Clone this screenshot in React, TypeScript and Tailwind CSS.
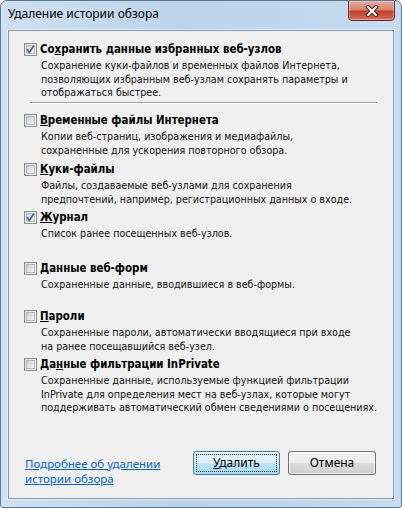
import React from "react";

const tahoma: React.CSSProperties = {
  fontFamily: "'DejaVu Sans Condensed', 'DejaVu Sans', 'Liberation Sans', sans-serif",
  fontStretch: "condensed",
};
const segoe: React.CSSProperties = {
  fontFamily: "'Noto Sans', 'Open Sans', 'Liberation Sans', sans-serif",
};

function CheckBox({ checked }: { checked?: boolean }) {
  return (
    <svg width="13" height="13" viewBox="0 0 13 13" className="shrink-0 mt-[2px]">
      <defs>
        <linearGradient id="cbo" x1="0" y1="0" x2="1" y2="1">
          <stop offset="0" stopColor="#dcdcdc" />
          <stop offset="1" stopColor="#ffffff" />
        </linearGradient>
        <linearGradient id="cbi" x1="0" y1="0" x2="1" y2="1">
          <stop offset="0" stopColor="#cbcfd5" />
          <stop offset="1" stopColor="#f6f6f6" />
        </linearGradient>
      </defs>
      <rect x="0.5" y="0.5" width="12" height="12" fill="url(#cbo)" stroke="#8e8f8f" />
      <rect x="2.5" y="2.5" width="8" height="8" fill="url(#cbi)" stroke="#b4b8be" />
      {checked && (
        <path d="M3.2 6.2 L5.4 9.4 L9.8 2.8" fill="none" stroke="#4a5d8f" strokeWidth="1.7" strokeLinejoin="round" />
      )}
    </svg>
  );
}

function Item({
  checked,
  title,
  lines,
  h,
}: {
  checked?: boolean;
  title: React.ReactNode;
  lines: string[];
  h?: string;
}) {
  return (
    <div className={`flex pl-[15px] ${h ?? ""}`}>
      <CheckBox checked={checked} />
      <div className="ml-[3px]">
        <div className="text-[11.4px] leading-[16px] font-bold text-black whitespace-nowrap" style={tahoma}>
          {title}
        </div>
        <div className="mt-[2px] ml-[1px] text-[10.65px] leading-[13.5px] text-[#111] whitespace-nowrap" style={tahoma}>
          {lines.map((l, i) => (
            <div key={i}>{l}</div>
          ))}
        </div>
      </div>
    </div>
  );
}

export default function App() {
  return (
    <div className="w-[402px] h-[508px] bg-white">
      <div className="relative w-[402px] h-[508px] rounded-t-[7px] rounded-b-[3px] border border-[#5f7690] bg-[linear-gradient(to_right,#cfe0f2,#bcd3eb_45%,#c6dbef)] flex flex-col overflow-hidden">
        {/* title bar */}
        <div className="h-[29px] shrink-0 flex items-start pl-[7px] pt-[5px]">
          <span className="text-[12px] leading-[16px] text-black" style={segoe}>
            Удаление истории обзора
          </span>
        </div>
        {/* close button */}
        <div className="absolute top-[-1px] right-[6px] w-[47px] h-[21px] rounded-b-[4px] border border-[#6d2a22] bg-[linear-gradient(to_bottom,#e9a99c,#d8836f_45%,#c0402a_55%,#d2705c)] flex items-center justify-center shadow-[inset_0_0_0_1px_rgba(255,255,255,0.35)]">
          <svg width="14" height="12" viewBox="0 0 14 12">
            <path d="M3 2 L11 10 M11 2 L3 10" stroke="#4a1a14" strokeWidth="4" strokeLinecap="square" />
            <path d="M3 2 L11 10 M11 2 L3 10" stroke="#ffffff" strokeWidth="2.2" strokeLinecap="square" />
          </svg>
        </div>
        {/* panel */}
        <div className="mx-[7px] mb-[8px] flex-1 border border-[#8599af] shadow-[0_0_0_1px_rgba(255,255,255,0.5)] bg-[#f0f0f0] flex flex-col">
          <div className="pt-[10px]">
            <Item
              checked
              h="h-[61px]"
              title={
                <>
                  Со<u>х</u>ранить данные избранных веб-узлов
                </>
              }
              lines={[
                "Сохранение куки-файлов и временных файлов Интернета,",
                "позволяющих избранным веб-узлам сохранять параметры и",
                "отображаться быстрее.",
              ]}
            />
            <div className="ml-[21px] w-[347px] h-[2px] border-t border-[#a0a0a0] border-b border-b-white" />
            <div className="h-[8px]" />
            <Item
              h="h-[49px]"
              title={
                <>
                  <u>В</u>ременные файлы Интернета
                </>
              }
              lines={["Копии веб-страниц, изображения и медиафайлы,", "сохраненные для ускорения повторного обзора."]}
            />
            <Item
              h="h-[48px]"
              title={
                <>
                  <u>К</u>уки-файлы
                </>
              }
              lines={[
                "Файлы, создаваемые веб-узлами для сохранения",
                "предпочтений, например, регистрационных данных о входе.",
              ]}
            />
            <Item
              checked
              h="h-[51px]"
              title={
                <>
                  <u>Ж</u>урнал
                </>
              }
              lines={["Список ранее посещенных веб-узлов."]}
            />
            <Item
              h="h-[48px]"
              title={
                <>
                  <u>Д</u>анные веб-форм
                </>
              }
              lines={["Сохраненные данные, вводившиеся в веб-формы."]}
            />
            <Item
              h="h-[48px]"
              title={
                <>
                  <u>П</u>ароли
                </>
              }
              lines={[
                "Сохраненные пароли, автоматически вводящиеся при входе",
                "на ранее посещавшийся веб-узел.",
              ]}
            />
            <Item
              title={
                <>
                  Да<u>н</u>ные фильтрации InPrivate
                </>
              }
              lines={[
                "Сохраненные данные, используемые функцией фильтрации",
                "InPrivate для определения мест на веб-узлах, которые могут",
                "поддерживать автоматический обмен сведениями о посещениях.",
              ]}
            />
          </div>
          <div className="mt-auto flex items-start pl-[16px] pr-[17px] pb-[12px]">
            <div className="mt-[5px] text-[11.5px] text-[#0a64c8] underline whitespace-nowrap" style={segoe}>
              <div className="h-[15px] leading-[15px]">Подробнее об удалении</div>
              <div className="h-[15px] leading-[15px]">истории обзора</div>
            </div>
            <div className="ml-auto flex gap-[8px]">
              <div className="w-[87px] h-[24px] rounded-[3px] border border-[#3c7fb1] bg-[linear-gradient(to_bottom,#eaf6fd,#d9f0fc_50%,#bee6fd_50%,#a7d9f5)] p-[2px]">
                <div className="w-full h-full border border-dotted border-[#333] flex items-center justify-center text-[12px] text-black" style={segoe}>
                  <span>
                    <u>У</u>далить
                  </span>
                </div>
              </div>
              <div className="w-[88px] h-[24px] rounded-[3px] border border-[#707070] bg-[linear-gradient(to_bottom,#f2f2f2,#ebebeb_50%,#dddddd_50%,#cfcfcf)] flex items-center justify-center text-[12px] text-black shadow-[inset_0_0_0_1px_rgba(255,255,255,0.7)]" style={segoe}>
                Отмена
              </div>
            </div>
          </div>
        </div>
      </div>
    </div>
  );
}
